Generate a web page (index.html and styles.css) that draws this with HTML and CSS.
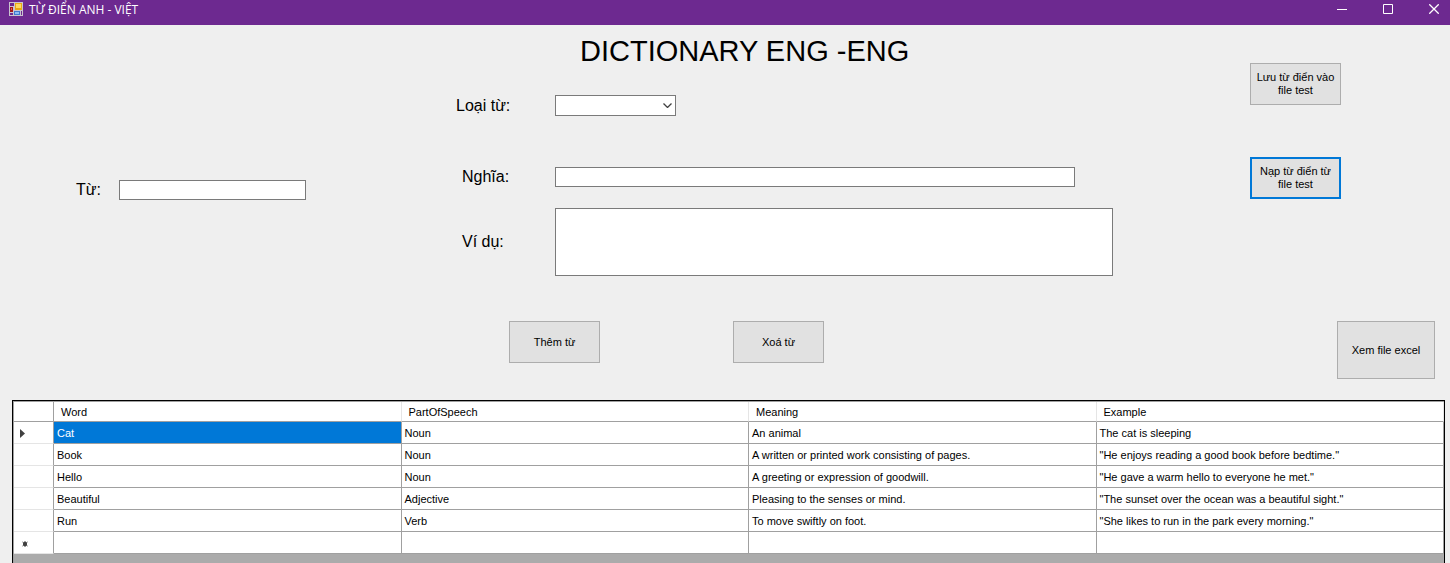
FILE: index.html
```html
<!DOCTYPE html>
<html lang="vi">
<head>
<meta charset="utf-8">
<meta name="viewport" content="width=device-width, initial-scale=1">
<title>TỪ ĐIỂN ANH - VIỆT</title>
<link rel="stylesheet" href="styles.css">
</head>
<body>
<header class="titlebar">
  <svg class="app-icon" viewBox="0 0 14 14" aria-hidden="true" shape-rendering="crispEdges">
    <path fill="#c9c3cf" d="M0 0h14v14H0z"/>
    <path fill="#6d2990" d="M1 1h4v3H1zM1 11h3v2H1zM12 9h1v4h-1z"/>
    <path fill="#a31616" d="M1 5h3v5H1z"/>
    <path fill="#e8604a" d="M2 6h1v2H2z"/>
    <path fill="#e9a915" d="M6 1h7v7H6z"/>
    <path fill="#ffd95e" d="M7 2h5v4H7z"/>
    <path fill="#3f78d0" d="M5 9h6v4H5z"/>
    <path fill="#8dbcf5" d="M6 10h4v2H6z"/>
  </svg>
  <span class="caption">TỪ ĐIỂN ANH - VIỆT</span>
  <div class="window-buttons">
    <button class="window-button" type="button" aria-label="Minimize"><svg viewBox="0 0 10 10"><path d="M0 5.5h10"/></svg></button>
    <button class="window-button" type="button" aria-label="Maximize"><svg viewBox="0 0 10 10"><path d="M.5.5h9v9h-9z"/></svg></button>
    <button class="window-button" type="button" aria-label="Close"><svg viewBox="0 0 10 10"><path stroke-width="1.3" d="M.3.3l9.4 9.4M9.7.3L.3 9.7"/></svg></button>
  </div>
</header>
<main class="window">
  <form class="entry">
    <div class="word">
      <label for="word">Từ:</label>
      <input class="box word-box" id="word" type="text">
    </div>
    <div class="details">
      <h1 class="title">DICTIONARY ENG -ENG</h1>
      <div class="row row-type">
        <label class="row-label" for="type">Loại từ:</label>
        <div class="select">
          <select class="box select-box" id="type"><option></option></select>
          <svg class="chevron" viewBox="0 0 9 5" aria-hidden="true"><path d="M.5.5l4 4 4-4"/></svg>
        </div>
      </div>
      <div class="row row-meaning">
        <label class="row-label row-label-inset" for="meaning">Nghĩa:</label>
        <input class="box meaning-box" id="meaning" type="text">
      </div>
      <div class="row">
        <label class="row-label row-label-inset" for="example">Ví dụ:</label>
        <textarea class="box example-box" id="example"></textarea>
      </div>
      <div class="commands">
        <button class="button" type="button">Thêm từ</button>
        <button class="button" type="button">Xoá từ</button>
      </div>
    </div>
    <div class="files">
      <button class="button" type="button">Lưu từ điển vào file test</button>
      <button class="button button-focus" type="button">Nạp từ điển từ file test</button>
      <button class="button button-large" type="button">Xem file excel</button>
    </div>
  </form>
  <section class="grid">
    <table class="table">
      <colgroup><col class="marker-col"><col><col><col><col></colgroup>
      <thead>
        <tr><th class="marker"></th><th>Word</th><th>PartOfSpeech</th><th>Meaning</th><th>Example</th></tr>
      </thead>
      <tbody>
        <tr><td class="marker"><svg class="arrow" viewBox="0 0 5 9" aria-hidden="true"><path d="M0 0l5 4.5L0 9z"/></svg></td><td class="selected">Cat</td><td>Noun</td><td>An animal</td><td>The cat is sleeping</td></tr>
        <tr><td class="marker"></td><td>Book</td><td>Noun</td><td>A written or printed work consisting of pages.</td><td>"He enjoys reading a good book before bedtime."</td></tr>
        <tr><td class="marker"></td><td>Hello</td><td>Noun</td><td>A greeting or expression of goodwill.</td><td>"He gave a warm hello to everyone he met."</td></tr>
        <tr><td class="marker"></td><td>Beautiful</td><td>Adjective</td><td>Pleasing to the senses or mind.</td><td>"The sunset over the ocean was a beautiful sight."</td></tr>
        <tr><td class="marker"></td><td>Run</td><td>Verb</td><td>To move swiftly on foot.</td><td>"She likes to run in the park every morning."</td></tr>
        <tr><td class="marker"><svg class="star" viewBox="0 0 6 6" aria-hidden="true"><path d="M3 0v6M.5 1l5 4M5.5 1l-5 4"/><circle cx="3" cy="3" r="1.6"/></svg></td><td></td><td></td><td></td><td></td></tr>
      </tbody>
    </table>
  </section>
</main>
</body>
</html>
```
FILE: styles.css
```css
* { box-sizing: border-box; }

body {
  margin: 0;
  min-height: 100vh;
  display: flex;
  flex-direction: column;
  background: #efefef;
  color: #000;
  font-family: "Liberation Sans", Arial, sans-serif;
  font-size: 11px;
}

.titlebar {
  display: flex;
  align-items: center;
  height: 25px;
  padding: 0 11px 7px 9px;
  background: #6d2990;
  color: #fff;
}

.app-icon { width: 14px; height: 14px; margin-right: 6px; }

.caption {
  padding-top: 1px;
  font-family: "Open Sans", "Noto Sans", sans-serif;
  font-size: 12px;
  line-height: 18px;
}

.window-buttons { display: flex; gap: 36px; margin-left: auto; }

.window-button {
  display: flex;
  padding: 0;
  border: 0;
  background: none;
}

.window-button svg {
  width: 10px;
  height: 10px;
  fill: none;
  stroke: #fff;
}

.window {
  flex: 1;
  display: flex;
  flex-direction: column;
}

.entry {
  display: grid;
  grid-template-columns: 456px minmax(0, 1fr) 200px;
  padding-bottom: 21px;
}

.word {
  display: flex;
  align-items: center;
  align-self: start;
  gap: 18px;
  padding: 155px 0 0 76px;
  font-size: 16px;
  line-height: 20px;
}

.box {
  display: block;
  height: 20px;
  margin: 0;
  padding: 0 3px;
  border: 1px solid #7a7a7a;
  border-radius: 0;
  background: #fff;
  font: inherit;
  resize: none;
  outline: 0;
}

.word-box { width: 187px; }

.title {
  margin: 8px 0 26px 124px;
  font-size: 29px;
  line-height: 36px;
  font-weight: 400;
}

.row {
  display: flex;
  align-items: center;
  font-size: 16px;
  line-height: 20px;
}

.row-type { margin-bottom: 51px; }
.row-meaning { margin-bottom: 21px; }
.row-label { flex: none; width: 99px; }
.row-label-inset { padding-left: 6px; }

.select { position: relative; width: 121px; }
.select-box { width: 100%; height: 21px; appearance: none; }

.chevron {
  position: absolute;
  top: 8px;
  right: 4px;
  width: 9px;
  height: 5px;
  fill: none;
  stroke: #404040;
  stroke-width: 1.3;
  pointer-events: none;
}

.meaning-box { width: calc(100% - 274px); }
.example-box { width: calc(100% - 236px); height: 68px; }

.commands {
  display: flex;
  gap: 133px;
  padding: 45px 0 0 53px;
}

.button {
  width: 91px;
  height: 42px;
  padding: 0 4px;
  border: 1px solid #adadad;
  border-radius: 0;
  background: #e1e1e1;
  color: #000;
  font: inherit;
  line-height: 13px;
}

.button-focus { border: 2px solid #0078d7; }

.button-large {
  align-self: flex-end;
  width: 98px;
  height: 58px;
  margin-top: auto;
}

.files {
  display: flex;
  flex-direction: column;
  gap: 52px;
  height: 354px;
  padding: 38px 15px 0 0;
}

.grid {
  flex: 1;
  margin: 0 5px 0 12px;
  border: 1px solid #000;
  border-bottom: 0;
  box-shadow: inset 1px 1px #a0a0a0;
  padding: 1px 0 0 1px;
  background: #ababab;
}

.table {
  width: 100%;
  table-layout: fixed;
  border-spacing: 0;
}

.marker-col { width: 40px; }

.table th,
.table td {
  height: 22px;
  padding: 2px 3px 0;
  border: solid #a0a0a0;
  border-width: 0 1px 1px 0;
  background: #fff;
  font-weight: 400;
  line-height: 13px;
  text-align: left;
}

.table th {
  height: 20px;
  padding-left: 7px;
  border-right-color: #e5e5e5;
}

.table th.marker { border-color: #a0a0a0; }

.table td.marker {
  padding-left: 6px;
  border-bottom-color: #e5e5e5;
}

.table td.selected { background: #0078d7; color: #fff; }

.arrow { display: block; width: 5px; height: 9px; fill: #404040; }

.star {
  display: block;
  width: 6px;
  height: 6px;
  margin-left: 2px;
  fill: #404040;
  stroke: #404040;
}
```
